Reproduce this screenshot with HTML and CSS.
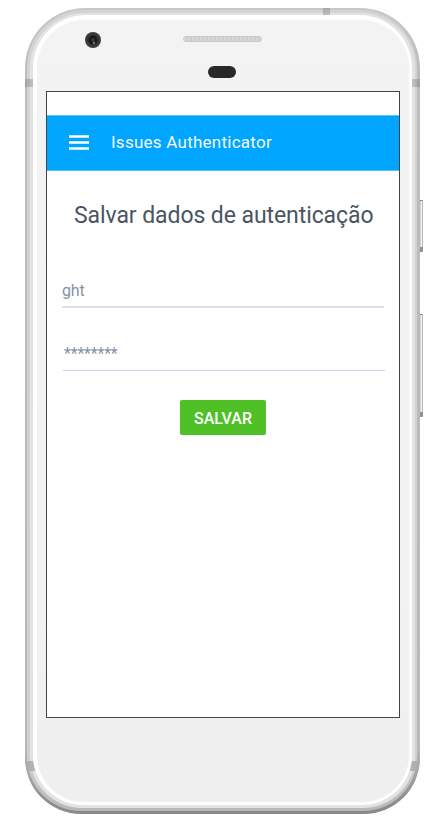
FILE: index.html
```html
<!DOCTYPE html>
<html lang="pt-BR">
<head>
<meta charset="utf-8">
<title>Issues Authenticator</title>
<link rel="stylesheet" href="styles.css">
</head>
<body>
<div class="phone">
  <i class="key power"></i>
  <i class="key volume"></i>
  <div class="rim"><div class="edge"><div class="glass"><div class="face">
    <div class="hardware">
      <svg class="camera" viewBox="0 0 16 16"><circle cx="8" cy="8" r="8" fill="#393b3e"/><circle cx="8" cy="8" r="6" fill="#303235"/><circle cx="8" cy="8" r="4.300" fill="#15171a"/><circle cx="8" cy="8" r="2" fill="#36383b"/><circle cx="9" cy="11" r="1.200" fill="#7d8129"/></svg>
      <span class="speaker"></span>
      <span class="sensor"></span>
    </div>
    <main class="screen">
      <header class="bar">
        <svg class="menu" viewBox="0 0 20 15"><path d="M0 1.500h20M0 7.500h20M0 13.500h20" stroke="#fff" stroke-width="2.300"/></svg>
        <span class="app-name">Issues Authenticator</span>
      </header>
      <h1>Salvar dados de autenticação</h1>
      <div class="field user">ght</div>
      <div class="field password">********</div>
      <button type="button">SALVAR</button>
    </main>
  </div></div></div></div>
  <i class="band top"></i>
  <i class="band left"></i>
  <i class="band right"></i>
  <svg class="band low-left" viewBox="0 0 10 11"><path d="M0 0h8l2 10H2Q.5 5 0 0Z" fill="#aaa" fill-opacity=".85"/></svg>
  <svg class="band low-right" viewBox="0 0 10 11"><path d="M10 0H2L0 10h8q1.500-5 2-10Z" fill="#aaa" fill-opacity=".85"/></svg>
</div>
</body>
</html>
```
FILE: styles.css
```css
* { box-sizing: border-box; }
body { margin: 0; background: #fff; font-family: Roboto, "Liberation Sans", sans-serif; }
.phone {
  position: relative;
  width: 395px;
  height: 806px;
  margin: 8px 0 0 25px;
  padding: 2px 3px 3px 2px;
  border-radius: 60px 60px 56px 56px;
  background: linear-gradient(#c8c8c8 0, #bcbcbc 8%, #b8b8b8 92%, #8b8989 99%);
}
.rim {
  height: 100%;
  padding: 3px 2px 3px 3px;
  border-radius: 58px 58px 54px 54px;
  background: linear-gradient(#d4d4d4, #d0d0d0 93%, #b8b8b8);
}
.edge {
  height: 100%;
  padding: 2px 3px 3px 3px;
  border-radius: 55px 55px 52px 52px;
  background: #e3e3e3;
}
.glass {
  height: 100%;
  padding: 5px 3px 3px 4px;
  border-radius: 53px 53px 50px 50px;
  background: #fff;
}
.face {
  height: 100%;
  padding-left: 9px;
  border-radius: 48px 48px 47px 47px;
  background: linear-gradient(#f3f3f3, #f2f2f2 70%, #efefef);
  box-shadow: 0 0 2px #f5f5f5;
}
.hardware {
  display: grid;
  grid-template-columns: 137px 80px;
  grid-template-rows: 29px 42px;
  height: 71px;
}
.camera { width: 16px; height: 16px; margin: 12px 0 0 39px; }
.speaker {
  width: 79px;
  height: 6px;
  margin-top: 16px;
  border: 1px solid #c9c9c9;
  border-radius: 3px;
  background: repeating-linear-gradient(90deg, #d7d7d7 0 2px, #cecece 2px 4px);
}
.sensor {
  grid-column: 2;
  width: 28px;
  height: 12px;
  margin: 17px 0 0 25px;
  border-radius: 6px;
  background: #292929;
}
.screen {
  display: flex;
  flex-direction: column;
  width: 354px;
  height: 627px;
  padding-top: 23px;
  border: 1px solid #444;
  background: #fff;
}
.bar {
  display: flex;
  align-items: center;
  height: 56px;
  padding-left: 22px;
  border-top: 1px solid #59c3fc;
  border-bottom: 1px solid #59c3fc;
  background: #00a5ff;
}
.menu { width: 20px; height: 15px; margin-bottom: 1px; }
.app-name {
  margin: 0 0 2px 22px;
  color: #f2faff;
  font-size: 17px;
  line-height: 22px;
  letter-spacing: .25px;
}
h1 {
  height: 32px;
  margin: 29px 0 0 27px;
  color: #4a5564;
  font-size: 23px;
  font-weight: 400;
  line-height: 32px;
  letter-spacing: -.08px;
  white-space: nowrap;
}
.field { width: 322px; color: #8492a6; font-size: 16px; line-height: 22px; }
.user { height: 28px; margin: 48px 0 0 15px; border-bottom: 2px solid #dde1ec; letter-spacing: -.2px; }
.password { height: 28px; margin: 35px 0 0 16px; padding-left: 1px; border-bottom: 1px solid #c8d3e5; letter-spacing: -.2px; }
button {
  width: 86px;
  height: 35px;
  margin: 29px 0 0 133px;
  padding: 2px 0 0;
  border: 0;
  border-radius: 2px;
  background: #4fc127;
  color: #fff;
  font: 500 16px/20px Roboto, "Liberation Sans", sans-serif;
}
.key {
  position: absolute;
  left: 395px;
  width: 3px;
  border-radius: 0 1px 1px 0;
  background: linear-gradient(90deg, #d5d5d5 0 1px, #eee 1px 2px, #bcbcbc 2px);
  border-top: 1px solid #858585;
  border-bottom: 5px solid #929292;
}
.power { top: 192px; height: 52px; }
.volume { top: 306px; height: 103px; }
.band { position: absolute; background: rgb(110 110 110 / 32%); }
.top { top: 0; left: 298px; width: 7px; height: 7px; }
.left { top: 71px; left: 0; width: 8px; height: 8px; }
.right { top: 71px; left: 387px; width: 8px; height: 8px; }
.low-left, .low-right { top: 753px; width: 10px; height: 11px; background: none; }
.low-left { left: 0; }
.low-right { left: 385px; }
```
